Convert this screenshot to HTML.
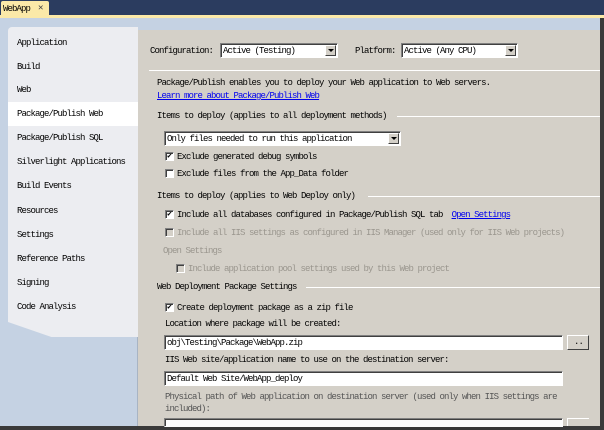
<!DOCTYPE html>
<html><head><style>
*{margin:0;padding:0;box-sizing:border-box}
body{width:604px;height:430px;overflow:hidden;background:#c5d2e3;font-family:"Liberation Mono",monospace;font-size:9px;letter-spacing:-0.9px;color:#000;position:relative}
.a{position:absolute;white-space:nowrap;line-height:10px}
.top{position:absolute;left:0;top:0;width:604px;height:15px;background:#2b3c5f}
.tab{position:absolute;left:1px;top:1px;width:48px;height:16px;background:#fbe9a8;border-radius:2px 2px 0 0}
.yl{position:absolute;left:0;top:15px;width:604px;height:3px;background:#fbe9a8}
.sb{position:absolute;left:8px;top:27px;width:130px;height:310px;background:#ecedf1;border-radius:4px 0 0 0;clip-path:polygon(0 0,100% 0,100% 340px,0 295px)}
.it{position:absolute;left:17px;line-height:10px}
.sel{position:absolute;left:8px;top:102px;width:130px;height:24px;background:#fff}
.sep{position:absolute;height:1px;background:#a0a0a0;border-bottom:1px solid #fff}
.panel{position:absolute;left:137px;top:30px;width:463px;height:397px;background:#d4d0c8;border-left:1px solid #a8b4c4}
.sel2{position:absolute;height:15px;background:#fff;border:1px solid;border-color:#808080 #fff #fff #808080;box-shadow:inset 1px 1px 0 #404040}
.dd{position:absolute;right:1px;top:1px;width:11px;height:11px;background:#d4d0c8;border:1px solid;border-color:#fff #404040 #404040 #fff}
.dd:after{content:"";position:absolute;left:2px;top:3px;border:3px solid transparent;border-top:3px solid #000;border-bottom:0}
.cb{position:absolute;width:9px;height:9px;background:#fff;border:1px solid;border-color:#808080 #fff #fff #808080;box-shadow:inset 1px 1px 0 #404040;font-size:8px;line-height:7px;text-align:center;letter-spacing:0}
.dis{color:#9a968e}
.cbd{background:#d4d0c8}
a{color:#0000ee;text-decoration:underline}
</style></head><body>
<div class="top"></div><div class="tab"></div>
<div class="a" style="left:3px;top:4px">WebApp</div>
<div class="a" style="left:38px;top:3px;color:#444">✕</div>
<div class="yl"></div>
<div class="panel"></div>
<div style="position:absolute;left:0;top:426px;width:604px;height:4px;background:#3a3a3a"></div>
<div style="position:absolute;left:600px;top:18px;width:4px;height:412px;background:#3a3a3a"></div>
<div class="sb"></div>
<div class="sel"></div>
<div class="it a" style="top:38px">Application</div>
<div class="it a" style="top:62px">Build</div>
<div class="it a" style="top:85px">Web</div>
<div class="it a" style="top:109px">Package/Publish Web</div>
<div class="it a" style="top:133px">Package/Publish SQL</div>
<div class="it a" style="top:157px">Silverlight Applications</div>
<div class="it a" style="top:181px">Build Events</div>
<div class="it a" style="top:206px">Resources</div>
<div class="it a" style="top:230px">Settings</div>
<div class="it a" style="top:254px">Reference Paths</div>
<div class="it a" style="top:278px">Signing</div>
<div class="it a" style="top:302px">Code Analysis</div>

<div class="a" style="left:150px;top:46px">Configuration:</div>
<div class="sel2" style="left:220px;top:43px;width:118px"><div class="dd"></div></div>
<div class="a" style="left:223px;top:46px">Active (Testing)</div>
<div class="a" style="left:355px;top:46px">Platform:</div>
<div class="sel2" style="left:401px;top:43px;width:117px"><div class="dd"></div></div>
<div class="a" style="left:404px;top:46px">Active (Any CPU)</div>
<div class="sep" style="left:149px;top:70px;width:451px"></div>

<div class="a" style="left:157px;top:78px">Package/Publish enables you to deploy your Web application to Web servers.</div>
<div class="a" style="left:157px;top:91px"><a>Learn more about Package/Publish Web</a></div>
<div class="a" style="left:157px;top:111px">Items to deploy (applies to all deployment methods)</div>
<div class="sep" style="left:397px;top:116px;width:203px"></div>
<div class="sel2" style="left:164px;top:131px;width:237px"><div class="dd"></div></div>
<div class="a" style="left:167px;top:134px">Only files needed to run this application</div>
<div class="cb" style="left:165px;top:152px">✔</div>
<div class="a" style="left:177px;top:152px">Exclude generated debug symbols</div>
<div class="cb" style="left:165px;top:169px"></div>
<div class="a" style="left:177px;top:169px">Exclude files from the App_Data folder</div>

<div class="a" style="left:157px;top:191px">Items to deploy (applies to Web Deploy only)</div>
<div class="sep" style="left:368px;top:196px;width:232px"></div>
<div class="cb" style="left:165px;top:210px">✔</div>
<div class="a" style="left:177px;top:210px">Include all databases configured in Package/Publish SQL tab &nbsp;<a>Open Settings</a></div>
<div class="cb cbd" style="left:165px;top:228px"></div>
<div class="a dis" style="left:177px;top:228px">Include all IIS settings as configured in IIS Manager (used only for IIS Web projects)</div>
<div class="a dis" style="left:163px;top:246px">Open Settings</div>
<div class="cb cbd" style="left:176px;top:264px"></div>
<div class="a dis" style="left:188px;top:264px">Include application pool settings used by this Web project</div>

<div class="a" style="left:157px;top:282px">Web Deployment Package Settings</div>
<div class="sep" style="left:306px;top:287px;width:294px"></div>
<div class="cb" style="left:165px;top:303px">✔</div>
<div class="a" style="left:177px;top:303px">Create deployment package as a zip file</div>
<div class="a" style="left:165px;top:319px">Location where package will be created:</div>
<div class="sel2" style="left:164px;top:335px;width:399px"></div>
<div class="a" style="left:167px;top:338px">obj\Testing\Package\WebApp.zip</div>
<div style="position:absolute;left:567px;top:335px;width:22px;height:15px;background:#d4d0c8;border:1px solid;border-color:#fff #404040 #404040 #fff"></div>
<div class="a" style="left:574px;top:337px">..</div>
<div class="a" style="left:165px;top:355px">IIS Web site/application name to use on the destination server:</div>
<div class="sel2" style="left:164px;top:371px;width:399px"></div>
<div class="a" style="left:167px;top:374px">Default Web Site/WebApp_deploy</div>
<div class="a dis" style="left:165px;top:392px;color:#555">Physical path of Web application on destination server (used only when IIS settings are</div>
<div class="a dis" style="left:165px;top:404px;color:#555">included):</div>
<div class="sel2" style="left:164px;top:418px;width:399px;height:9px"></div>
<div style="position:absolute;left:567px;top:418px;width:22px;height:8px;background:#d4d0c8;border-top:1px solid #fff;border-left:1px solid #fff"></div>
</body></html>
